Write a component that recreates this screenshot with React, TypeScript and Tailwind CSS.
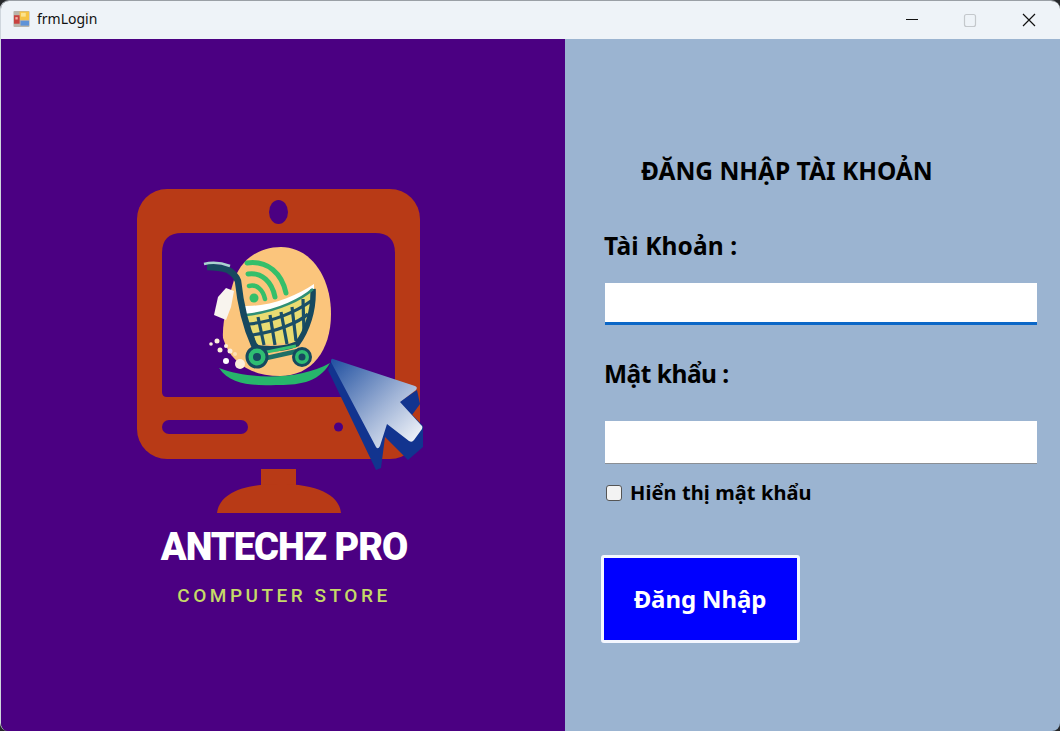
import React from "react"

const uiFont = "font-['Noto_Sans','DejaVu_Sans',sans-serif]"

const FormIcon = () => (
  <svg width="17" height="18" viewBox="0 0 18 18" className="shrink-0 -mt-[2px]">
    <rect x="0.5" y="0.5" width="17" height="17" rx="1" fill="#b9b4aa" />
    <rect x="7" y="1" width="10" height="9" fill="#f6c443" />
    <rect x="8.5" y="2.5" width="5" height="4" fill="#fbe38d" />
    <rect x="1" y="5" width="6" height="9" fill="#c8423f" />
    <rect x="2.5" y="7" width="2.5" height="2.5" fill="#f2b3a8" />
    <rect x="8" y="11" width="9" height="5" fill="#5f93d8" />
  </svg>
)

const WindowControls = () => (
  <div className="flex items-center">
    <svg width="58" height="38" viewBox="0 0 58 38" className="text-[#111]">
      <path d="M24 18.500H36" stroke="currentColor" strokeWidth="1" />
    </svg>
    <svg width="62" height="38" viewBox="0 0 62 38">
      <rect x="24.500" y="13.500" width="11" height="12" rx="2" fill="none" stroke="#c4c8cc" strokeWidth="1.200" />
    </svg>
    <svg width="58" height="38" viewBox="0 0 58 38" className="text-[#111]">
      <path d="M21 13L33 25M33 13L21 25" stroke="currentColor" strokeWidth="1.200" />
    </svg>
  </div>
)

const Logo = () => (
  <svg width="310" height="340" viewBox="130 180 310 340" className="block blur-[0.4px]">
    <defs>
      <linearGradient id="arrow" x1="0" y1="0" x2="1" y2="1">
        <stop offset="0" stopColor="#1f4fa0" />
        <stop offset="0.55" stopColor="#9fb3d6" />
        <stop offset="1" stopColor="#ffffff" />
      </linearGradient>
    </defs>
    {/* monitor */}
    <rect x="137" y="189" width="283" height="270" rx="30" fill="#b83a16" />
    <path d="M182 233H375Q395 233 395 253V392Q395 397 390 397H167Q162 397 162 392V253Q162 233 182 233Z" fill="#4b0082" />
    <ellipse cx="278.500" cy="212" rx="9.500" ry="12" fill="#4b0082" />
    <rect x="162" y="420" width="86" height="14" rx="7" fill="#4b0082" />
    <circle cx="338.500" cy="427" r="4.500" fill="#4b0082" />
    <rect x="261" y="469" width="35" height="17" fill="#b83a16" />
    <path d="M217 513C219 495 240 484 279 484C318 484 339 495 341 513Z" fill="#b83a16" />
    {/* cart badge */}
    <path d="M281 247C310 247 331 276 331 314C331 350 312 376 280 376C250 376 230 362 223 338C222 322 228 300 234 280C242 258 260 247 281 247Z" fill="#fbc57c" />
    <path d="M219 368C250 380 300 380 330 363C318 384 296 385 276 385C250 386 230 384 219 368Z" fill="#27b56b" />
    <g fill="none" strokeLinecap="round">
      <path d="M247 263C268 260 282 274 286 293" stroke="#35bf6a" strokeWidth="5" />
      <path d="M248 274C262 272 272 282 275 297" stroke="#35bf6a" strokeWidth="5" />
      <path d="M249 286C257 284 263 290 265 299" stroke="#35bf6a" strokeWidth="4.500" />
    </g>
    <circle cx="254" cy="298" r="4.500" fill="#35bf6a" />
    {/* white band */}
    <path d="M243 306C270 307 296 296 314 284L314 291C296 304 268 316 246 316Z" fill="#ffffff" />
    {/* basket */}
    <path d="M246 314C270 314 295 304 312 291C313 310 307 328 298 342L256 345C252 335 248 324 246 314Z" fill="#e9dc72" />
    <g fill="none" stroke="#1b4f68" strokeWidth="3.200">
      <path d="M249 324C272 322 296 312 311 301" />
      <path d="M252 335C275 332 298 323 308 314" />
      <path d="M258 317L264 345" />
      <path d="M270 315L275 345" />
      <path d="M281 312L287 344" />
      <path d="M292 307L296 341" />
      <path d="M303 299L304 333" />
    </g>
    <path d="M313 289C314 310 307 331 297 344C282 350 268 350 252 347" fill="none" stroke="#17485f" strokeWidth="5.500" />
    <path d="M313 289C303 298 280 311 246 315" fill="none" stroke="#2f8f76" strokeWidth="2.500" />
    {/* handle and pole */}
    <path d="M207 267C215 267 222 268 228 270C232 272 236 276 238 281C240 300 245 325 254 345L260 351" fill="none" stroke="#17485f" strokeWidth="6.500" strokeLinejoin="round" />
    <path d="M204 264C212 262 222 263 230 266" fill="none" stroke="#a9d3cf" strokeWidth="2.500" />
    {/* tag */}
    <path d="M234 291L226 288L218 297L214 315L226 320L231 307Z" fill="#f8f4ee" />
    {/* frame and wheels */}
    <path d="M262 359L298 351" stroke="#1f6f66" strokeWidth="4.500" />
    <path d="M262 353L296 346" stroke="#38c070" strokeWidth="3" />
    <circle cx="257" cy="357" r="10" fill="#2fbd72" stroke="#17485f" strokeWidth="3" />
    <circle cx="257" cy="357" r="4" fill="#17485f" />
    <circle cx="302" cy="357" r="8.500" fill="#2fbd72" stroke="#17485f" strokeWidth="3" />
    <circle cx="302" cy="357" r="3.500" fill="#17485f" />
    {/* sparkles */}
    <g fill="#fbeedb">
      <circle cx="240" cy="364" r="5" />
      <circle cx="226" cy="361" r="3" fill="#ffffff" />
      <circle cx="220" cy="350" r="2.500" />
      <circle cx="211" cy="344" r="1.800" />
      <circle cx="217" cy="341" r="2.500" />
      <circle cx="230" cy="351" r="2.500" />
      <circle cx="226" cy="346" r="2" />
      <circle cx="235" cy="354" r="2" fill="#ffe0b0" />
    </g>
    {/* cursor */}
    <path d="M332 359L328 370L376 470L381 468L385 437L408 460L423 447L423 426L400 402Z" fill="#12348f" />
    <path d="M417 390L399 402L412 415L420 404Z" fill="#12348f" />
    <path d="M333 359Q331 358 331 362L376 447Q378 450 380 446L387 424L409 441Q412 443 414 440L422 429Q423 426 421 425L400 402L416 390Q418 387 415 386Z" fill="url(#arrow)" />
  </svg>
)

export default function App() {
  return (
    <div className="w-[1060px] h-[731px] bg-[#26282b] overflow-hidden">
      <div className="w-full h-full rounded-t-[9px] rounded-b-[8px] overflow-hidden flex flex-col border-t border-l border-t-[#9aa0a6] border-l-[#cfd6dd]">
        <div className={`h-[38px] bg-[#eef3f8] flex items-center justify-between pl-[12px] ${uiFont}`}>
          <div className="flex items-center gap-[7px]">
            <FormIcon />
            <span className="text-[14px] leading-[20px] -mt-[2px] text-[#111]">frmLogin</span>
          </div>
          <WindowControls />
        </div>
        <div className="flex-1 flex">
          <div className="w-[564px] bg-[#4b0082] flex flex-col pt-[141px] pl-[129px]">
            <Logo />
            <div className="w-[308px] mt-[5px] flex flex-col items-center">
              <div className="font-['Roboto',sans-serif] font-black text-white text-[38px] leading-[44px] tracking-[-1px] whitespace-nowrap">ANTECHZ PRO</div>
              <div className="font-['Roboto',sans-serif] font-medium mt-[15px] text-[#c5da68] text-[19px] leading-[24px] tracking-[3.500px] whitespace-nowrap">COMPUTER STORE</div>
            </div>
          </div>
          <div className={`flex-1 bg-[#9bb4d1] flex flex-col pl-[40px] pr-[23px] pt-[114px] text-black ${uiFont}`}>
            <div className="pl-[36px] h-[36px] leading-[36px] text-[24.500px] font-bold whitespace-nowrap">ĐĂNG NHẬP TÀI KHOẢN</div>
            <div className="mt-[39px] -ml-[1px] h-[36px] leading-[36px] text-[24.500px] tracking-[0.1px] font-bold whitespace-nowrap">Tài Khoản :</div>
            <div className="mt-[19px] h-[42px] bg-white border-b-[3px] border-[#0b67c7]" />
            <div className="mt-[31px] -ml-[1px] h-[36px] leading-[36px] text-[24.500px] tracking-[-0.5px] font-bold whitespace-nowrap">Mật khẩu :</div>
            <div className="mt-[29px] h-[43px] bg-white border-b border-[#8b8f94]" />
            <div className="mt-[15px] flex items-center h-[28px] pl-[1px]">
              <span className="w-[16px] h-[16px] bg-[#f3f3f3] border border-[#555] rounded-[3px]" />
              <span className="ml-[8px] text-[20px] tracking-[0.1px] font-bold whitespace-nowrap">Hiển thị mật khẩu</span>
            </div>
            <button className="mt-[48px] -ml-[4px] w-[199px] h-[88px] pr-[1px] bg-[#0000ff] border-[3px] border-[#f4f7ff] rounded-[3px] text-white text-[24px] tracking-[-0.1px] font-bold">Đăng Nhập</button>
          </div>
        </div>
      </div>
    </div>
  )
}
